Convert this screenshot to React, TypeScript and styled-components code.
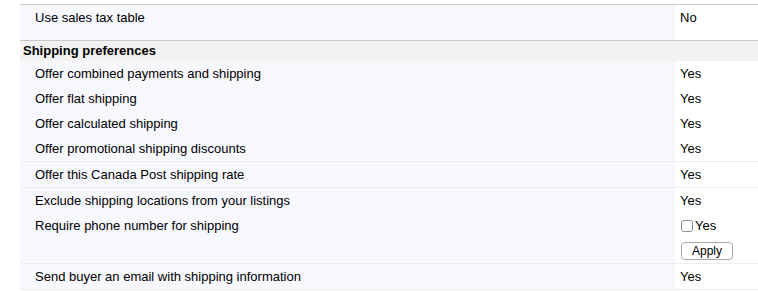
import React from "react";
import styled, { createGlobalStyle } from "styled-components";

const Global = createGlobalStyle`
  html, body { margin: 0; padding: 0; background: #ffffff; }
  body { font-family: "Liberation Sans", Arial, sans-serif; font-size: 13px; color: #000; }
`;

const Table = styled.div`
  margin: 4px 0 0 20px;
  border-top: 1px solid #c8c8c8;
  display: flex;
  flex-direction: column;
`;

const Group = styled.div<{ $strong?: boolean }>`
  display: flex;
  flex-direction: column;
  border-bottom: 1px solid ${(p) => (p.$strong ? "#c8c8c8" : "#ececf2")};
`;

const Row = styled.div<{ $height?: number }>`
  display: grid;
  grid-template-columns: 655px 1fr;
  height: ${(p) => p.$height ?? 25}px;
`;

const Label = styled.div`
  background: #f7f7fe;
  padding-left: 15px;
  line-height: 25px;
  white-space: nowrap;
`;

const Value = styled.div`
  background: #ffffff;
  padding-left: 5px;
  line-height: 25px;
  display: flex;
  align-items: center;
  height: 25px;
`;

const SectionHeader = styled.div`
  background: #f2f2f2;
  height: 20px;
  line-height: 20px;
  padding-left: 3px;
  font-weight: bold;
`;

const CheckLabel = styled.label`
  display: flex;
  align-items: center;
  margin-left: 1px;
`;

const Check = styled.input`
  appearance: none;
  -webkit-appearance: none;
  width: 12px;
  height: 12px;
  margin: 0 2px 0 0;
  border: 1px solid #8c8c8c;
  border-radius: 3px;
  background: #fff;
  box-sizing: border-box;
`;

const ApplyButton = styled.button`
  margin-left: 1px;
  width: 52px;
  height: 18px;
  padding: 0;
  border: 1px solid #a9a9a9;
  border-radius: 4px;
  background: #ffffff;
  font-family: "Liberation Sans", Arial, sans-serif;
  font-size: 12px;
  color: #000;
  line-height: 16px;
`;

const Line: React.FC<{ label?: string; height?: number; children?: React.ReactNode }> = ({
  label,
  height,
  children,
}) => (
  <Row $height={height}>
    <Label>{label}</Label>
    <Value>{children}</Value>
  </Row>
);

export default function App() {
  return (
    <>
      <Global />
      <Table>
        <Group $strong>
          <Line label="Use sales tax table" height={35}>
            No
          </Line>
        </Group>
        <SectionHeader>Shipping preferences</SectionHeader>
        <Group>
          <Line label="Offer combined payments and shipping">Yes</Line>
          <Line label="Offer flat shipping">Yes</Line>
          <Line label="Offer calculated shipping">Yes</Line>
          <Line label="Offer promotional shipping discounts">Yes</Line>
        </Group>
        <Group>
          <Line label="Offer this Canada Post shipping rate">Yes</Line>
        </Group>
        <Group>
          <Line label="Exclude shipping locations from your listings">Yes</Line>
          <Line label="Require phone number for shipping">
            <CheckLabel>
              <Check type="checkbox" />
              Yes
            </CheckLabel>
          </Line>
          <Line>
            <ApplyButton type="button">Apply</ApplyButton>
          </Line>
        </Group>
        <Group>
          <Line label="Send buyer an email with shipping information">Yes</Line>
        </Group>
      </Table>
    </>
  );
}
